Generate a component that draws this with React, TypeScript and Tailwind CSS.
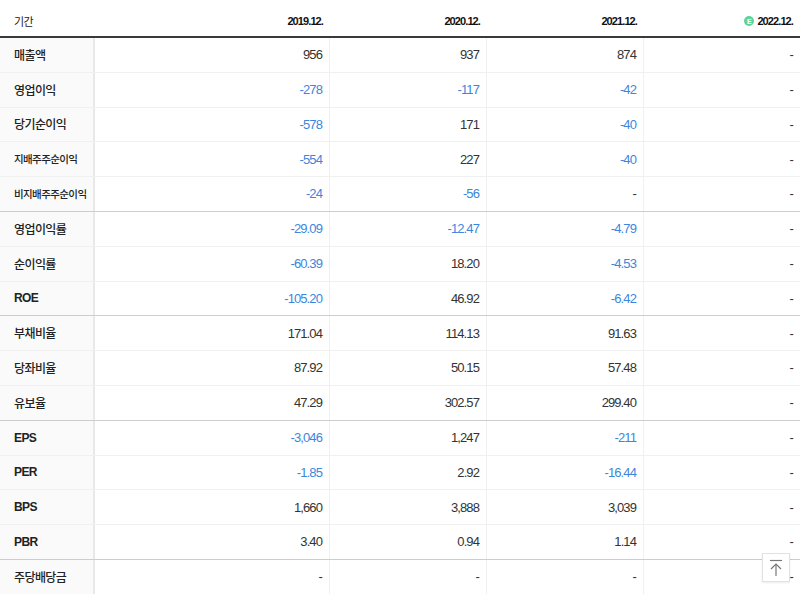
import React from 'react';

type Row = {
  label: string;
  values: string[];
  small?: boolean;
  sep?: boolean;
};

const rows: Row[] = [
  { label: '매출액', values: ['956', '937', '874', '-'] },
  { label: '영업이익', values: ['-278', '-117', '-42', '-'] },
  { label: '당기순이익', values: ['-578', '171', '-40', '-'] },
  { label: '지배주주순이익', values: ['-554', '227', '-40', '-'], small: true },
  { label: '비지배주주순이익', values: ['-24', '-56', '-', '-'], small: true, sep: true },
  { label: '영업이익률', values: ['-29.09', '-12.47', '-4.79', '-'] },
  { label: '순이익률', values: ['-60.39', '18.20', '-4.53', '-'] },
  { label: 'ROE', values: ['-105.20', '46.92', '-6.42', '-'], sep: true },
  { label: '부채비율', values: ['171.04', '114.13', '91.63', '-'] },
  { label: '당좌비율', values: ['87.92', '50.15', '57.48', '-'] },
  { label: '유보율', values: ['47.29', '302.57', '299.40', '-'], sep: true },
  { label: 'EPS', values: ['-3,046', '1,247', '-211', '-'] },
  { label: 'PER', values: ['-1.85', '2.92', '-16.44', '-'] },
  { label: 'BPS', values: ['1,660', '3,888', '3,039', '-'] },
  { label: 'PBR', values: ['3.40', '0.94', '1.14', '-'], sep: true },
  { label: '주당배당금', values: ['-', '-', '-', '-'] },
];

const years = ['2019.12.', '2020.12.', '2021.12.'];

const grid = 'grid grid-cols-[95px_235px_157px_157px_1fr]';

function isNeg(v: string) {
  return v.startsWith('-') && v.length > 1;
}

export default function App() {
  return (
    <div className="relative w-[800px] h-[594px] overflow-hidden bg-white font-['Liberation_Sans',Arial,sans-serif] text-[#333]">
      <div className={`${grid} h-[38px] border-b-2 border-[#3a3a3a] text-[11px]`}>
        <div className="pl-[14px] pt-[14px] font-['Noto_Sans_CJK_KR',sans-serif] text-[11px] leading-[14px] tracking-[-0.5px] text-[#222]">
          기간
        </div>
        {years.map((y) => (
          <div key={y} className="pr-[7px] pt-[14px] text-right font-bold leading-[14px] tracking-[-0.9px] text-[#111]">
            {y}
          </div>
        ))}
        <div className="flex items-start justify-end gap-[3px] pr-[7px] pt-[14px] font-bold leading-[14px] tracking-[-0.9px] text-[#111]">
          <span className="mt-[2px] flex h-[10px] w-[10px] items-center justify-center rounded-full bg-[#5fd39c] text-[7px] font-bold leading-none tracking-normal text-white">
            E
          </span>
          2022.12.
        </div>
      </div>

      {rows.map((r) => (
        <div
          key={r.label}
          className={`${grid} h-[34.8px] border-b ${r.sep ? 'border-[#cdcdcd]' : 'border-[#f0f0f0]'}`}
        >
          <div
            className={`flex items-center whitespace-nowrap border-r-2 border-[#e8e8e8] bg-[#fafafa] pl-[14px] text-[#222] ${
              r.small
                ? "font-['Noto_Sans_CJK_KR',sans-serif] text-[10.5px] font-medium tracking-[-0.6px]"
                : /^[A-Z]/.test(r.label)
                ? "font-['Liberation_Sans',Arial,sans-serif] text-[12px] font-bold tracking-[-0.6px]"
                : "font-['Noto_Sans_CJK_KR',sans-serif] text-[12px] font-medium tracking-[-0.6px]"
            }`}
          >
            {r.label}
          </div>
          {r.values.map((v, i) => (
            <div
              key={i}
              className={`flex items-center justify-end pr-[7px] text-[13px] tracking-[-0.9px] ${
                i < 3 ? 'border-r border-[#f0f0f0]' : ''
              } ${isNeg(v) ? 'text-[#3c86dd]' : 'text-[#333]'}`}
            >
              {v}
            </div>
          ))}
        </div>
      ))}

      <button className="absolute left-[762px] top-[553px] flex h-[29px] w-[28px] items-center justify-center border border-[#e2e2e2] bg-white shadow-[0_1px_2px_rgba(0,0,0,0.08)]">
        <svg width="16" height="18" viewBox="0 0 16 18" fill="none" stroke="#777" strokeWidth="1.2">
          <line x1="2" y1="1.5" x2="14" y2="1.5" />
          <line x1="8" y1="5" x2="8" y2="17" />
          <polyline points="3,10 8,5 13,10" />
        </svg>
      </button>
    </div>
  );
}
